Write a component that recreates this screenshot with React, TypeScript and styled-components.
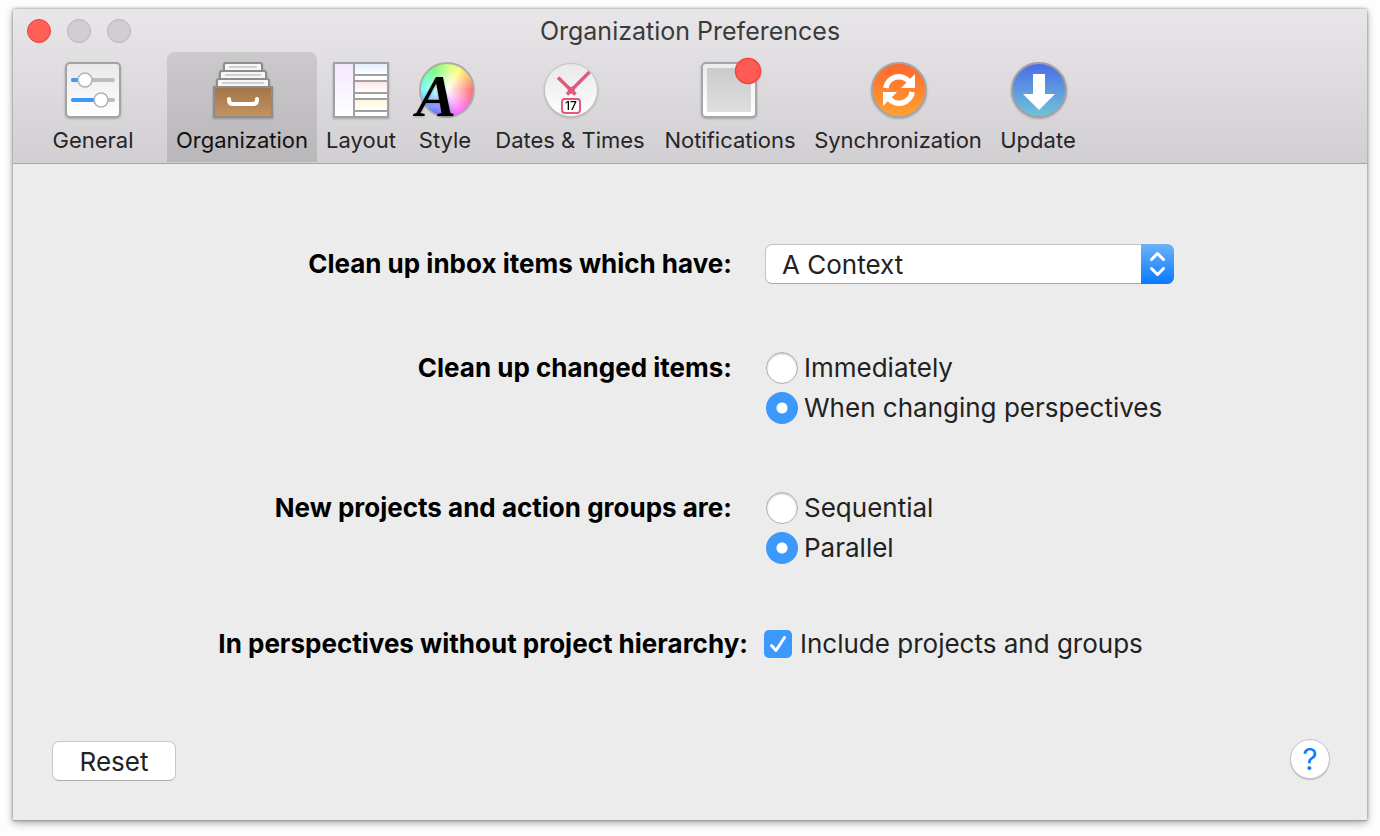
import React, { useState } from "react";
import styled, { createGlobalStyle, css } from "styled-components";

const GlobalStyle = createGlobalStyle`
  *, *::before, *::after { box-sizing: border-box; }
  body {
    margin: 0;
    background: #fdfdfd;
    font-family: Inter, "Liberation Sans", sans-serif;
    color: #222;
  }
  button, input, select { font: inherit; color: inherit; margin: 0; }
`;

const Page = styled.div`
  min-height: 100vh;
  padding: 9px 13px 16px;
  display: flex;
`;

const Window = styled.main`
  flex: 1;
  min-width: 0;
  display: flex;
  flex-direction: column;
  background: #ececec;
  box-shadow:
    0 1px 0 #a2a2a2,
    0 0 3px rgba(0, 0, 0, 0.4),
    0 3px 8px rgba(0, 0, 0, 0.32);
`;

const Header = styled.header`
  padding-bottom: 1px;
  background: linear-gradient(#e8e6e9, #d1cfd2);
  border-bottom: 1px solid #a6a5a7;
`;

const TitleBar = styled.div`
  display: grid;
  grid-template-columns: 1fr auto 1fr;
  align-items: center;
  height: 43px;
  padding: 0 14px;
`;

const Lights = styled.div`
  display: flex;
  gap: 16px;
`;

const Light = styled.button<{ $active?: boolean }>`
  width: 24px;
  height: 24px;
  padding: 0;
  border-radius: 50%;
  border: 1px solid ${(p) => (p.$active ? "#e2463f" : "#b5b3b6")};
  background: ${(p) => (p.$active ? "#ff5f57" : "#d0ced1")};
`;

const Title = styled.h1`
  margin: 0;
  font-size: 25px;
  line-height: 32px;
  font-weight: 400;
  color: #3a3a3a;
`;

const Toolbar = styled.nav`
  display: flex;
  padding-left: 30px;
`;

const Tab = styled.button<{ $width: number; $selected: boolean; $apart: boolean }>`
  width: ${(p) => p.$width}px;
  height: 110px;
  padding: 6px 0 0;
  margin-right: ${(p) => (p.$apart ? 24 : 0)}px;
  border: 0;
  border-radius: 8px 8px 0 0;
  display: flex;
  flex-direction: column;
  align-items: center;
  gap: 4px;
  font-size: 22px;
  line-height: 28px;
  white-space: nowrap;
  color: ${(p) => (p.$selected ? "#111" : "#262528")};
  background: ${(p) => (p.$selected ? "linear-gradient(#cbc9cc, #b9b7ba)" : "none")};
`;

const IconBox = styled.span`
  position: relative;
  width: 64px;
  height: 64px;
  display: block;
  svg {
    position: relative;
    display: block;
    overflow: visible;
    filter: drop-shadow(0 1px 1px rgba(0, 0, 0, 0.22));
  }
`;

const ColorWheel = styled.span`
  position: absolute;
  left: 6px;
  top: 4px;
  width: 56px;
  height: 56px;
  border-radius: 50%;
  border: 2px solid #aeacaf;
  background:
    radial-gradient(circle closest-side, #fff 0%, rgba(255, 255, 255, 0.8) 30%, rgba(255, 255, 255, 0.35) 100%),
    conic-gradient(#a0ff30, #ffff20 30deg, #ff2020 90deg, #ff20ff 150deg, #2020ff 210deg, #20ffff 270deg, #20ff20 330deg, #a0ff30);
`;

const Form = styled.form`
  flex: 1;
  display: flex;
  flex-direction: column;
  padding-top: 80px;
`;

const Rows = styled.div`
  display: flex;
  flex-direction: column;
  gap: 60px;
`;

const Row = styled.div<{ $height?: number }>`
  display: grid;
  grid-template-columns: 752fr 602fr;
  align-items: start;
  min-height: ${(p) => p.$height ?? 40}px;
  line-height: ${(p) => Math.min(p.$height ?? 40, 40)}px;
  font-size: 26px;
`;

const labelText = css<{ $inset?: number }>`
  padding-right: ${(p) => p.$inset ?? 33}px;
  text-align: right;
  font-weight: 700;
  color: #000;
`;

const RowLabel = styled.label<{ $inset?: number }>`${labelText}`;
const RowCaption = styled.span<{ $inset?: number }>`${labelText}`;

const SelectBox = styled.div`
  position: relative;
  width: 409px;
  max-width: calc(100% - 16px);
`;

const Select = styled.select`
  appearance: none;
  display: block;
  width: 100%;
  height: 40px;
  padding: 0 44px 0 16px;
  border: 1px solid #c3c3c3;
  border-bottom-color: #a8a8a8;
  border-radius: 7px;
  background: #fff;
`;

const Stepper = styled.span`
  position: absolute;
  top: 0;
  right: 0;
  width: 33px;
  height: 40px;
  border-radius: 0 7px 7px 0;
  background: linear-gradient(#6bb3fa, #0a78ff);
  pointer-events: none;
`;

const Options = styled.div`
  display: flex;
  flex-direction: column;
`;

const Option = styled.label<{ $gap: number }>`
  display: flex;
  align-items: center;
  gap: ${(p) => p.$gap}px;
`;

const Radio = styled.input`
  appearance: none;
  flex: none;
  width: 32px;
  height: 32px;
  margin-left: 1px;
  border-radius: 50%;
  border: 1px solid #b0b0b0;
  background: #fff;
  box-shadow: inset 0 1px 2px rgba(0, 0, 0, 0.25);
  &:checked {
    border: 0;
    box-shadow: none;
    background: radial-gradient(circle, #fff 0 5px, #3b99fc 6px);
  }
`;

const CheckWrap = styled.span`
  position: relative;
  width: 28px;
  height: 28px;
  margin-left: -1px;
  svg {
    position: absolute;
    inset: 0;
    pointer-events: none;
  }
`;

const Checkbox = styled.input`
  appearance: none;
  display: block;
  width: 28px;
  height: 28px;
  border-radius: 5px;
  border: 1px solid #b0b0b0;
  background: #fff;
  &:checked {
    border: 0;
    background: #3b99fc;
  }
`;

const Footer = styled.footer`
  margin-top: auto;
  padding: 0 37px 39px 39px;
  display: flex;
  justify-content: space-between;
  align-items: flex-end;
`;

const PushButton = styled.button`
  width: 124px;
  height: 40px;
  padding: 0;
  border: 1px solid #c6c6c6;
  border-bottom-color: #adadad;
  border-radius: 7px;
  background: #fff;
  font-size: 26px;
`;

const HelpButton = styled.button`
  width: 40px;
  height: 40px;
  padding: 0;
  margin-bottom: 2px;
  border: 1px solid #c4c4c4;
  border-radius: 50%;
  background: #fff;
  box-shadow: 0 1px 1px rgba(0, 0, 0, 0.2);
  font-size: 30px;
  line-height: 36px;
  color: #0a7cff;
`;

function GeneralIcon() {
  return (
    <svg width="64" height="64" viewBox="0 0 64 64" aria-hidden="true">
      <defs>
        <linearGradient id="panel" x1="0" y1="0" x2="0" y2="1">
          <stop offset="0" stopColor="#e9e9e9" />
          <stop offset="1" stopColor="#fff" />
        </linearGradient>
      </defs>
      <rect x="5" y="5" width="54" height="54" rx="4" fill="url(#panel)" stroke="#a3a3a3" strokeWidth="2" />
      <g strokeWidth="4" strokeLinecap="round">
        <path d="M12 22H52M12 42H52" stroke="#bcbcbc" />
        <path d="M12 22H22M12 42H38" stroke="#3b99fc" />
      </g>
      <g fill="#fff" stroke="#b2b2b2" strokeWidth="1.5">
        <circle cx="24" cy="22" r="7" />
        <circle cx="40" cy="42" r="7" />
      </g>
    </svg>
  );
}

function OrganizationIcon() {
  return (
    <svg width="64" height="64" viewBox="0 0 64 64" aria-hidden="true">
      <defs>
        <linearGradient id="drawer" x1="0" y1="0" x2="0" y2="1">
          <stop offset="0" stopColor="#a0744a" />
          <stop offset="1" stopColor="#c69360" />
        </linearGradient>
      </defs>
      <g fill="#f6f6f6" stroke="#8d8d8d" strokeWidth="2">
        <rect x="14" y="5" width="38" height="12" rx="2" />
        <rect x="10" y="13" width="46" height="12" rx="2" />
        <rect x="7" y="21" width="52" height="12" rx="2" />
        <rect x="4" y="29" width="58" height="30" fill="url(#drawer)" />
      </g>
      <path d="M19 9H47M15 17H51M12 25H54" stroke="#d0d0d0" strokeWidth="2" />
      <path d="M19 41v1q0 4 4 4H43q4 0 4-4v-1" fill="none" stroke="#fff" strokeWidth="4" strokeLinecap="round" />
    </svg>
  );
}

function LayoutIcon() {
  return (
    <svg width="64" height="64" viewBox="0 0 64 64" aria-hidden="true">
      <defs>
        {[["lilac", "#f3e8ff"], ["blue", "#e3eeff"], ["pink", "#ffe4e4"], ["cream", "#fff6dc"]].map(([id, color]) => (
          <linearGradient key={id} id={id} x1="0" y1="0" x2="0" y2="1">
            <stop offset="0" stopColor={color} />
            <stop offset="1" stopColor="#fff" />
          </linearGradient>
        ))}
      </defs>
      <rect x="4" y="4" width="56" height="56" fill="#a1a0a2" />
      <rect x="6" y="6" width="18" height="52" fill="url(#lilac)" />
      <rect x="26" y="6" width="32" height="10" fill="url(#blue)" />
      <rect x="26" y="18" width="32" height="4" fill="#fff" />
      <rect x="26" y="24" width="32" height="10" fill="url(#pink)" />
      <rect x="26" y="36" width="32" height="4" fill="#fff" />
      <rect x="26" y="42" width="32" height="10" fill="url(#cream)" />
      <rect x="26" y="54" width="32" height="4" fill="#fff" />
    </svg>
  );
}

function StyleIcon() {
  return (
    <>
      <ColorWheel />
      <svg width="64" height="64" viewBox="0 0 64 64" aria-hidden="true">
        <text x="3" y="58" fontFamily="Liberation Serif, serif" fontSize="60" fontWeight="700" fontStyle="italic" fill="#000">
          A
        </text>
      </svg>
    </>
  );
}

function DatesIcon() {
  return (
    <svg width="64" height="64" viewBox="0 0 64 64" aria-hidden="true">
      <defs>
        <linearGradient id="dial" x1="0" y1="0" x2="0" y2="1">
          <stop offset="0" stopColor="#e9e9e9" />
          <stop offset="1" stopColor="#fdfdfd" />
        </linearGradient>
      </defs>
      <circle cx="33" cy="32" r="26.5" fill="url(#dial)" stroke="#c4c4c4" strokeWidth="1" />
      <g stroke="#e2597d" strokeWidth="3.5" fill="none">
        <path d="M20 19.5L37.5 36.5" />
        <path d="M51.5 14L29 36.5" />
      </g>
      <circle cx="33.2" cy="32.3" r="3.5" fill="#e2597d" />
      <rect x="24" y="41" width="18" height="14" rx="3" fill="#fff" stroke="#e2597d" strokeWidth="2" />
      <text x="33" y="52" textAnchor="middle" fontSize="12" fontWeight="500" fill="#000">17</text>
    </svg>
  );
}

function NotificationsIcon() {
  return (
    <svg width="64" height="64" viewBox="0 0 64 64" aria-hidden="true">
      <defs>
        <linearGradient id="tile" x1="0" y1="0" x2="0" y2="1">
          <stop offset="0" stopColor="#cbcbcb" />
          <stop offset="1" stopColor="#dedede" />
        </linearGradient>
        <linearGradient id="frame" x1="0" y1="0" x2="0" y2="1">
          <stop offset="0" stopColor="#ececec" />
          <stop offset="1" stopColor="#fff" />
        </linearGradient>
      </defs>
      <rect x="4" y="5" width="54" height="54" rx="4" fill="url(#frame)" stroke="#a6a5a7" strokeWidth="2" />
      <rect x="9" y="10" width="44" height="44" fill="url(#tile)" />
      <circle cx="50" cy="13" r="12.5" fill="#ff5b55" stroke="#f5413b" strokeWidth="1.5" />
    </svg>
  );
}

function SyncIcon() {
  return (
    <svg width="64" height="64" viewBox="0 0 64 64" aria-hidden="true">
      <defs>
        <linearGradient id="orange" x1="0" y1="0" x2="0" y2="1">
          <stop offset="0" stopColor="#ff662b" />
          <stop offset="1" stopColor="#ffa232" />
        </linearGradient>
      </defs>
      <circle cx="33" cy="32" r="27" fill="url(#orange)" stroke="#a4a3a6" strokeWidth="2" />
      <g fill="none" stroke="#fff" strokeWidth="5.5">
        <path d="M19.8 30A13.3 13.3 0 0 1 43.5 24" />
        <path d="M46.2 34A13.3 13.3 0 0 1 22.5 40" />
      </g>
      <path d="M49 16V30H35ZM17 48V34H31Z" fill="#fff" />
    </svg>
  );
}

function UpdateIcon() {
  return (
    <svg width="64" height="64" viewBox="0 0 64 64" aria-hidden="true">
      <defs>
        <linearGradient id="sky" x1="0" y1="0" x2="0" y2="1">
          <stop offset="0" stopColor="#4b6be8" />
          <stop offset="1" stopColor="#6fc6d6" />
        </linearGradient>
      </defs>
      <circle cx="33" cy="32" r="27" fill="url(#sky)" stroke="#a09fa3" strokeWidth="2" />
      <path d="M27 16H39V36H49L33 52L17 36H27Z" fill="#fff" />
    </svg>
  );
}

const tabs = [
  { name: "General", width: 100, Icon: GeneralIcon, apart: true },
  { name: "Organization", width: 150, Icon: OrganizationIcon },
  { name: "Layout", width: 88, Icon: LayoutIcon },
  { name: "Style", width: 80, Icon: StyleIcon },
  { name: "Dates & Times", width: 170, Icon: DatesIcon },
  { name: "Notifications", width: 150, Icon: NotificationsIcon },
  { name: "Synchronization", width: 186, Icon: SyncIcon },
  { name: "Update", width: 94, Icon: UpdateIcon },
];

function RadioRow({ id, label, options, initial }: { id: string; label: string; options: string[]; initial: string }) {
  const [value, setValue] = useState(initial);
  return (
    <Row role="radiogroup" aria-labelledby={id}>
      <RowCaption id={id}>{label}</RowCaption>
      <Options>
        {options.map((option) => (
          <Option key={option} $gap={6}>
            <Radio type="radio" name={id} checked={value === option} onChange={() => setValue(option)} />
            {option}
          </Option>
        ))}
      </Options>
    </Row>
  );
}

export default function App() {
  const [tab, setTab] = useState("Organization");
  const [include, setInclude] = useState(true);
  return (
    <>
      <GlobalStyle />
      <Page>
        <Window>
          <Header>
            <TitleBar>
              <Lights>
                <Light $active aria-label="Close" />
                <Light aria-label="Minimize" />
                <Light aria-label="Zoom" />
              </Lights>
              <Title>Organization Preferences</Title>
            </TitleBar>
            <Toolbar>
              {tabs.map(({ name, width, Icon, apart }) => (
                <Tab key={name} $width={width} $selected={tab === name} $apart={!!apart} onClick={() => setTab(name)}>
                  <IconBox><Icon /></IconBox>
                  {name}
                </Tab>
              ))}
            </Toolbar>
          </Header>
          <Form onSubmit={(e) => e.preventDefault()}>
            <Rows>
              <Row $height={44}>
                <RowLabel htmlFor="inbox">Clean up inbox items which have:</RowLabel>
                <SelectBox>
                  <Select id="inbox" defaultValue="A Context">
                    <option>A Context</option>
                    <option>A Project</option>
                  </Select>
                  <Stepper>
                    <svg width="33" height="40" viewBox="0 0 33 40" fill="none" stroke="#fff" strokeWidth="3" strokeLinecap="round" strokeLinejoin="round" aria-hidden="true">
                      <path d="M10.5 15.5L16.5 9.5L22.5 15.5M10.5 24.5L16.5 30.5L22.5 24.5" />
                    </svg>
                  </Stepper>
                </SelectBox>
              </Row>
              <RadioRow id="changed" label="Clean up changed items:" options={["Immediately", "When changing perspectives"]} initial="When changing perspectives" />
              <RadioRow id="groups" label="New projects and action groups are:" options={["Sequential", "Parallel"]} initial="Parallel" />
              <Row $height={32}>
                <RowCaption id="hierarchy" $inset={17}>In perspectives without project hierarchy:</RowCaption>
                <Option $gap={8}>
                  <CheckWrap>
                    <Checkbox type="checkbox" aria-describedby="hierarchy" checked={include} onChange={(e) => setInclude(e.target.checked)} />
                    {include && (
                      <svg width="28" height="28" viewBox="0 0 28 28" fill="none" stroke="#fff" strokeWidth="3" strokeLinecap="round" strokeLinejoin="round" aria-hidden="true">
                        <path d="M7.500 15.500L12 20.500L20.500 7.500" />
                      </svg>
                    )}
                  </CheckWrap>
                  Include projects and groups
                </Option>
              </Row>
            </Rows>
            <Footer>
              <PushButton type="button">Reset</PushButton>
              <HelpButton type="button" aria-label="Help">?</HelpButton>
            </Footer>
          </Form>
        </Window>
      </Page>
    </>
  );
}
